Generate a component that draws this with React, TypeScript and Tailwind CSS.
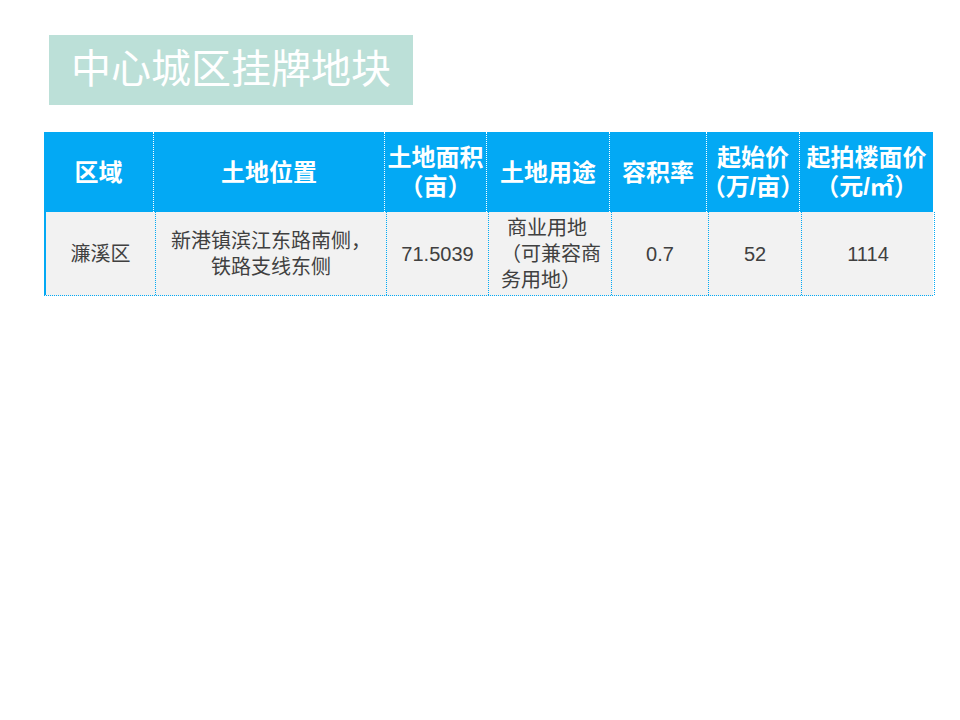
const cjk = "font-['Liberation_Sans','Noto_Sans_CJK_SC',sans-serif]"

const cols = 'grid-cols-[110px_231px_102px_123px_97px_93px_133px]'

const headers: string[][] = [
  ['区域'],
  ['土地位置'],
  ['土地面积', '（亩）'],
  ['土地用途'],
  ['容积率'],
  ['起始价', '（万/亩）'],
  ['起拍楼面价', '（元/㎡）'],
]

export default function App() {
  return (
    <div className={`w-[960px] h-[720px] bg-white ${cjk}`}>
      <div className="pt-[35px] pl-[49px]">
        <div className="w-[364px] h-[70px] bg-[#bce0d8] flex items-center justify-center text-white text-[40px] leading-none pb-[3px]">
          中心城区挂牌地块
        </div>
      </div>

      <div className="mt-[27px] ml-[44px] w-[889px]">
        {/* header */}
        <div className={`grid ${cols} h-[80px] bg-[#03a9f4] text-white font-bold text-[24px] leading-[29px]`}>
          {headers.map((h, i) => (
            <div
              key={i}
              className={`flex flex-col items-center justify-center text-center ${i < headers.length - 1 ? 'border-r border-dotted border-white' : ''}`}
            >
              {h.map((l, j) => (
                <span key={j} className="whitespace-nowrap">{l}</span>
              ))}
            </div>
          ))}
        </div>

        {/* row */}
        <div className={`grid ${cols} h-[84px] bg-[#f2f2f2] text-[#404040] border-l-2 border-[#03a9f4] border-b border-b-[#03a9f4] border-dotted [border-left-style:solid]`}>
          <div className="flex items-center justify-center text-[20px] border-r border-dotted border-[#03a9f4]">濂溪区</div>
          <div className="flex flex-col items-center justify-center text-[20px] leading-[26px] border-r border-dotted border-[#03a9f4]">
            <span className="whitespace-nowrap">新港镇滨江东路南侧，</span>
            <span className="whitespace-nowrap">铁路支线东侧</span>
          </div>
          <div className="flex items-center justify-center text-[20px] border-r border-dotted border-[#03a9f4]">71.5039</div>
          <div className="flex flex-col justify-center text-[20px] leading-[26px] pl-[12px] border-r border-dotted border-[#03a9f4]">
            <span className="whitespace-nowrap pl-[6px]">商业用地</span>
            <span className="whitespace-nowrap">（可兼容商</span>
            <span className="whitespace-nowrap">务用地）</span>
          </div>
          <div className="flex items-center justify-center text-[20px] border-r border-dotted border-[#03a9f4]">0.7</div>
          <div className="flex items-center justify-center text-[20px] border-r border-dotted border-[#03a9f4]">52</div>
          <div className="flex items-center justify-center text-[20px] border-r border-dotted border-[#03a9f4]">1114</div>
        </div>
      </div>
    </div>
  )
}
